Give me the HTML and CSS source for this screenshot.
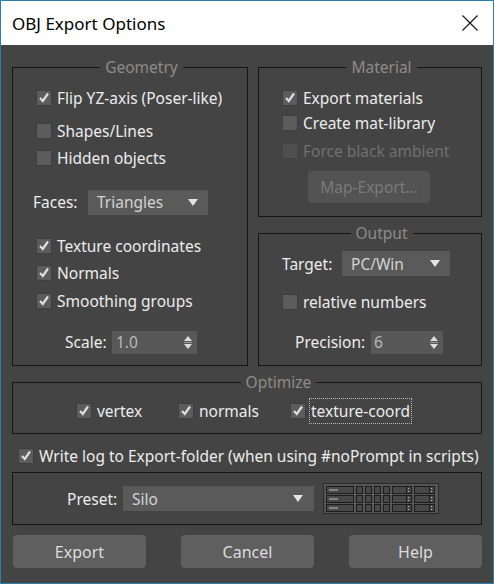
FILE: index.html
```html
<!DOCTYPE html>
<html lang="en">
<head>
    <meta charset="UTF-8">
    <title>OBJ Export Options</title>
    <link rel="stylesheet" href="styles.css">
</head>
<body>
<div class="window">
    <div class="titlebar">
        <span class="title">OBJ Export Options</span>
        <svg class="close" width="16" height="16" viewBox="0 0 16 16">
            <path d="M0.5 0.5 L15.5 15.5 M15.5 0.5 L0.5 15.5" stroke="#111" stroke-width="1.1" fill="none"/>
        </svg>
    </div>

    <div class="content">
        <div class="top">
            <!-- Geometry -->
            <fieldset class="group geometry">
                <legend>Geometry</legend>
                <label class="check"><span class="box on"></span>Flip YZ-axis (Poser-like)</label>
                <label class="check gap-9"><span class="box"></span>Shapes/Lines</label>
                <label class="check gap-3"><span class="box"></span>Hidden objects</label>
                <div class="field faces">
                    <span class="field-label">Faces:</span>
                    <div class="select select-faces"><span>Triangles</span><span class="arrow"></span></div>
                </div>
                <label class="check gap-19"><span class="box on"></span>Texture coordinates</label>
                <label class="check gap-3"><span class="box on"></span>Normals</label>
                <label class="check gap-4"><span class="box on"></span>Smoothing groups</label>
                <div class="field scale">
                    <span class="field-label">Scale:</span>
                    <div class="spin spin-scale"><span>1.0</span><span class="spinner"></span></div>
                </div>
            </fieldset>

            <div class="side">
                <!-- Material -->
                <fieldset class="group material">
                    <legend>Material</legend>
                    <label class="check"><span class="box on"></span>Export materials</label>
                    <label class="check gap-1"><span class="box"></span>Create mat-library</label>
                    <label class="check gap-4 disabled"><span class="box"></span>Force black ambient</label>
                    <div class="map-export">Map-Export...</div>
                </fieldset>

                <!-- Output -->
                <fieldset class="group output">
                    <legend>Output</legend>
                    <div class="field target">
                        <span class="field-label">Target:</span>
                        <div class="select select-target"><span>PC/Win</span><span class="arrow"></span></div>
                    </div>
                    <label class="check relative"><span class="box"></span>relative numbers</label>
                    <div class="field precision">
                        <span class="field-label">Precision:</span>
                        <div class="spin spin-precision"><span>6</span><span class="spinner"></span></div>
                    </div>
                </fieldset>
            </div>
        </div>

        <!-- Optimize -->
        <fieldset class="group optimize">
            <legend>Optimize</legend>
            <div class="opt-row">
                <label class="check opt-vertex"><span class="box on"></span>vertex</label>
                <label class="check opt-normals"><span class="box on"></span>normals</label>
                <label class="check"><span class="box on"></span><span class="focused">texture-coord</span></label>
            </div>
        </fieldset>

        <label class="check write-log"><span class="box on"></span>Write log to Export-folder (when using #noPrompt in scripts)</label>

        <div class="preset">
            <span class="field-label">Preset:</span>
            <div class="select select-preset"><span>Silo</span><span class="arrow"></span></div>
            <svg class="preset-icon" width="116" height="31" viewBox="0 0 116 31">
                <rect x="0.5" y="0.5" width="115" height="30" fill="#555" stroke="#2a2a2a"/>
                <g fill="#484848" stroke="#1c1c1c">
                    <rect x="3.5" y="3.5" width="27" height="7"/>
                    <rect x="33.5" y="3.5" width="6" height="7"/>
                    <rect x="42.5" y="3.5" width="6" height="7"/>
                    <rect x="51.5" y="3.5" width="6" height="7"/>
                    <rect x="60.5" y="3.5" width="6" height="7"/>
                    <rect x="69.5" y="3.5" width="19" height="7"/>
                    <rect x="91.5" y="3.5" width="20" height="7"/>

                    <rect x="3.5" y="12.5" width="27" height="7"/>
                    <rect x="33.5" y="12.5" width="6" height="7"/>
                    <rect x="42.5" y="12.5" width="6" height="7"/>
                    <rect x="51.5" y="12.5" width="6" height="7"/>
                    <rect x="60.5" y="12.5" width="6" height="7"/>
                    <rect x="69.5" y="12.5" width="19" height="7"/>
                    <rect x="91.5" y="12.5" width="20" height="7"/>

                    <rect x="3.5" y="21.5" width="27" height="7"/>
                    <rect x="33.5" y="21.5" width="6" height="7"/>
                    <rect x="42.5" y="21.5" width="6" height="7"/>
                    <rect x="51.5" y="21.5" width="6" height="7"/>
                    <rect x="60.5" y="21.5" width="6" height="7"/>
                    <rect x="69.5" y="21.5" width="19" height="7"/>
                    <rect x="91.5" y="21.5" width="20" height="7"/>
                </g>
                <g fill="#bdbdbd">
                    <rect x="6" y="6.5" width="9" height="1"/>
                    <rect x="6" y="15.5" width="9" height="1"/>
                    <rect x="6" y="24.5" width="9" height="1"/>
                    <rect x="85" y="5" width="1" height="1"/><rect x="85" y="8" width="1" height="1"/>
                    <rect x="108" y="5" width="1" height="1"/><rect x="108" y="8" width="1" height="1"/>
                    <rect x="85" y="14" width="1" height="1"/><rect x="85" y="17" width="1" height="1"/>
                    <rect x="108" y="14" width="1" height="1"/><rect x="108" y="17" width="1" height="1"/>
                    <rect x="85" y="23" width="1" height="1"/><rect x="85" y="26" width="1" height="1"/>
                    <rect x="108" y="23" width="1" height="1"/><rect x="108" y="26" width="1" height="1"/>
                </g>
                <g stroke="#1c1c1c" fill="none">
                    <path d="M83.5 4 V10 M106.5 4 V10 M83.5 13 V19 M106.5 13 V19 M83.5 22 V28 M106.5 22 V28"/>
                </g>
            </svg>
        </div>

        <div class="buttons">
            <div class="button">Export</div>
            <div class="button">Cancel</div>
            <div class="button">Help</div>
        </div>
    </div>
</div>
</body>
</html>
```

FILE: styles.css
```css
* {
    box-sizing: border-box;
}
body {
    margin: 0;
    font-family: "Noto Sans", "Open Sans", sans-serif;
    font-size: 15.5px;
    background-color: #444;
}
.window {
    width: 494px;
    height: 584px;
    border: 1px solid #2c7fab;
    background-color: #444;
    display: flex;
    flex-direction: column;
}
.titlebar {
    flex: none;
    height: 44px;
    background-color: #fff;
    display: flex;
    align-items: center;
    justify-content: space-between;
    padding: 0 15px 0 11px;
}
.title {
    font-size: 17px;
    color: #000;
}
.content {
    padding: 12px 11px 0 11px;
    color: #ececec;
}
.top {
    display: grid;
    grid-template-columns: 236px 224px;
    column-gap: 10px;
}
.side {
    display: flex;
    flex-direction: column;
    gap: 6px;
}

/* group boxes */
.group {
    margin: 0;
    padding: 0;
    border: 1px solid #151515;
    min-width: 0;
}
.group legend {
    margin: 0 auto;
    padding: 0 5px;
    line-height: 20px;
    color: #8e8b87;
}
.geometry {
    padding: 9px 0 11px 23px;
}
.material {
    padding: 9px 0 13px 23px;
}
.output {
    flex: 1;
    padding: 8px 0 11px 23px;
}
.optimize {
    margin-top: 6px;
    padding: 7px 0 10px 63px;
}

/* checkboxes */
.check {
    display: flex;
    align-items: center;
    height: 24px;
    white-space: nowrap;
}
.box {
    flex: none;
    width: 16px;
    height: 16px;
    margin-right: 5px;
    background-color: #5c5c5c;
    border: 1px solid #3e3e3e;
    position: relative;
}
.box.on::after {
    content: "";
    position: absolute;
    left: 2px;
    top: 1px;
    width: 10px;
    height: 11px;
    background: url("data:image/svg+xml;utf8,<svg xmlns='http://www.w3.org/2000/svg' width='10' height='11' viewBox='0 0 10 11'><path d='M1 6 L3.8 9 L9 1.5' stroke='%23dedede' stroke-width='2.2' fill='none'/></svg>") no-repeat;
}
.disabled {
    color: #707070;
}
.disabled .box {
    background-color: #4f4f4f;
    border-color: #444;
}
.gap-1 { margin-top: 1px; }
.gap-3 { margin-top: 3px; }
.gap-4 { margin-top: 4px; }
.gap-9 { margin-top: 9px; }
.gap-19 { margin-top: 19px; }

/* labelled fields */
.field {
    display: flex;
    align-items: center;
}
.field-label {
    white-space: nowrap;
}
.faces {
    margin-top: 19px;
    margin-left: -3px;
    height: 26px;
}
.faces .field-label {
    width: 55px;
}
.scale {
    margin-top: 17px;
    margin-left: 29px;
    height: 24px;
}
.scale .field-label {
    width: 47px;
}
.target .field-label {
    width: 60px;
}
.relative {
    margin-top: 14px;
}
.precision {
    margin-top: 16px;
    margin-left: 13px;
    height: 24px;
}
.precision .field-label {
    width: 76px;
}

.select {
    display: flex;
    align-items: center;
    justify-content: space-between;
    height: 25px;
    padding: 0 10px 0 9px;
    background-color: #5a5a5a;
    color: #d2d2d2;
}
.select-faces { width: 120px; }
.select-target { width: 108px; }
.arrow {
    width: 10px;
    height: 7px;
    background: url("data:image/svg+xml;utf8,<svg xmlns='http://www.w3.org/2000/svg' width='10' height='7'><path d='M0 0 H10 L5 7 Z' fill='%23e4e4e4'/></svg>") no-repeat;
}

.spin {
    display: flex;
    align-items: center;
    justify-content: space-between;
    height: 23px;
    padding: 0 5px 0 4px;
    background-color: #585858;
    color: #b8b8b8;
}
.spin-scale { width: 85px; }
.spin-precision { width: 72px; padding-left: 3px; }
.spinner {
    width: 8px;
    height: 15px;
    background: url("data:image/svg+xml;utf8,<svg xmlns='http://www.w3.org/2000/svg' width='8' height='15'><path d='M0 6 L4 1 L8 6 Z M0 9 H8 L4 14 Z' fill='%23dcdcdc'/><rect x='0' y='7' width='8' height='1' fill='%23999'/></svg>") no-repeat;
}

.map-export {
    margin: 8px 0 0 26px;
    width: 122px;
    height: 32px;
    border-radius: 4px;
    background-color: #535353;
    color: #7a7a7a;
    display: flex;
    align-items: center;
    justify-content: center;
}

/* optimize row */
.opt-row {
    display: flex;
}
.opt-vertex { width: 102px; }
.opt-normals { width: 112px; }
.focused {
    outline: 1px dotted #bbb;
    outline-offset: 1px;
}

.write-log {
    margin: 10px 0 0 6px;
}

/* preset */
.preset {
    margin-top: 4px;
    height: 53px;
    border: 1px solid #151515;
    display: flex;
    align-items: center;
    padding-left: 54px;
}
.preset .field-label {
    width: 56px;
}
.select-preset {
    width: 191px;
    margin-right: 9px;
    padding-right: 11px;
}

/* bottom buttons */
.buttons {
    margin: 10px 0 0 1px;
    display: flex;
    justify-content: space-between;
}
.button {
    width: 133px;
    height: 33px;
    border-radius: 4px;
    background-color: #5f5f5f;
    color: #dcdcdc;
    font-size: 16px;
    display: flex;
    align-items: center;
    justify-content: center;
}
```
